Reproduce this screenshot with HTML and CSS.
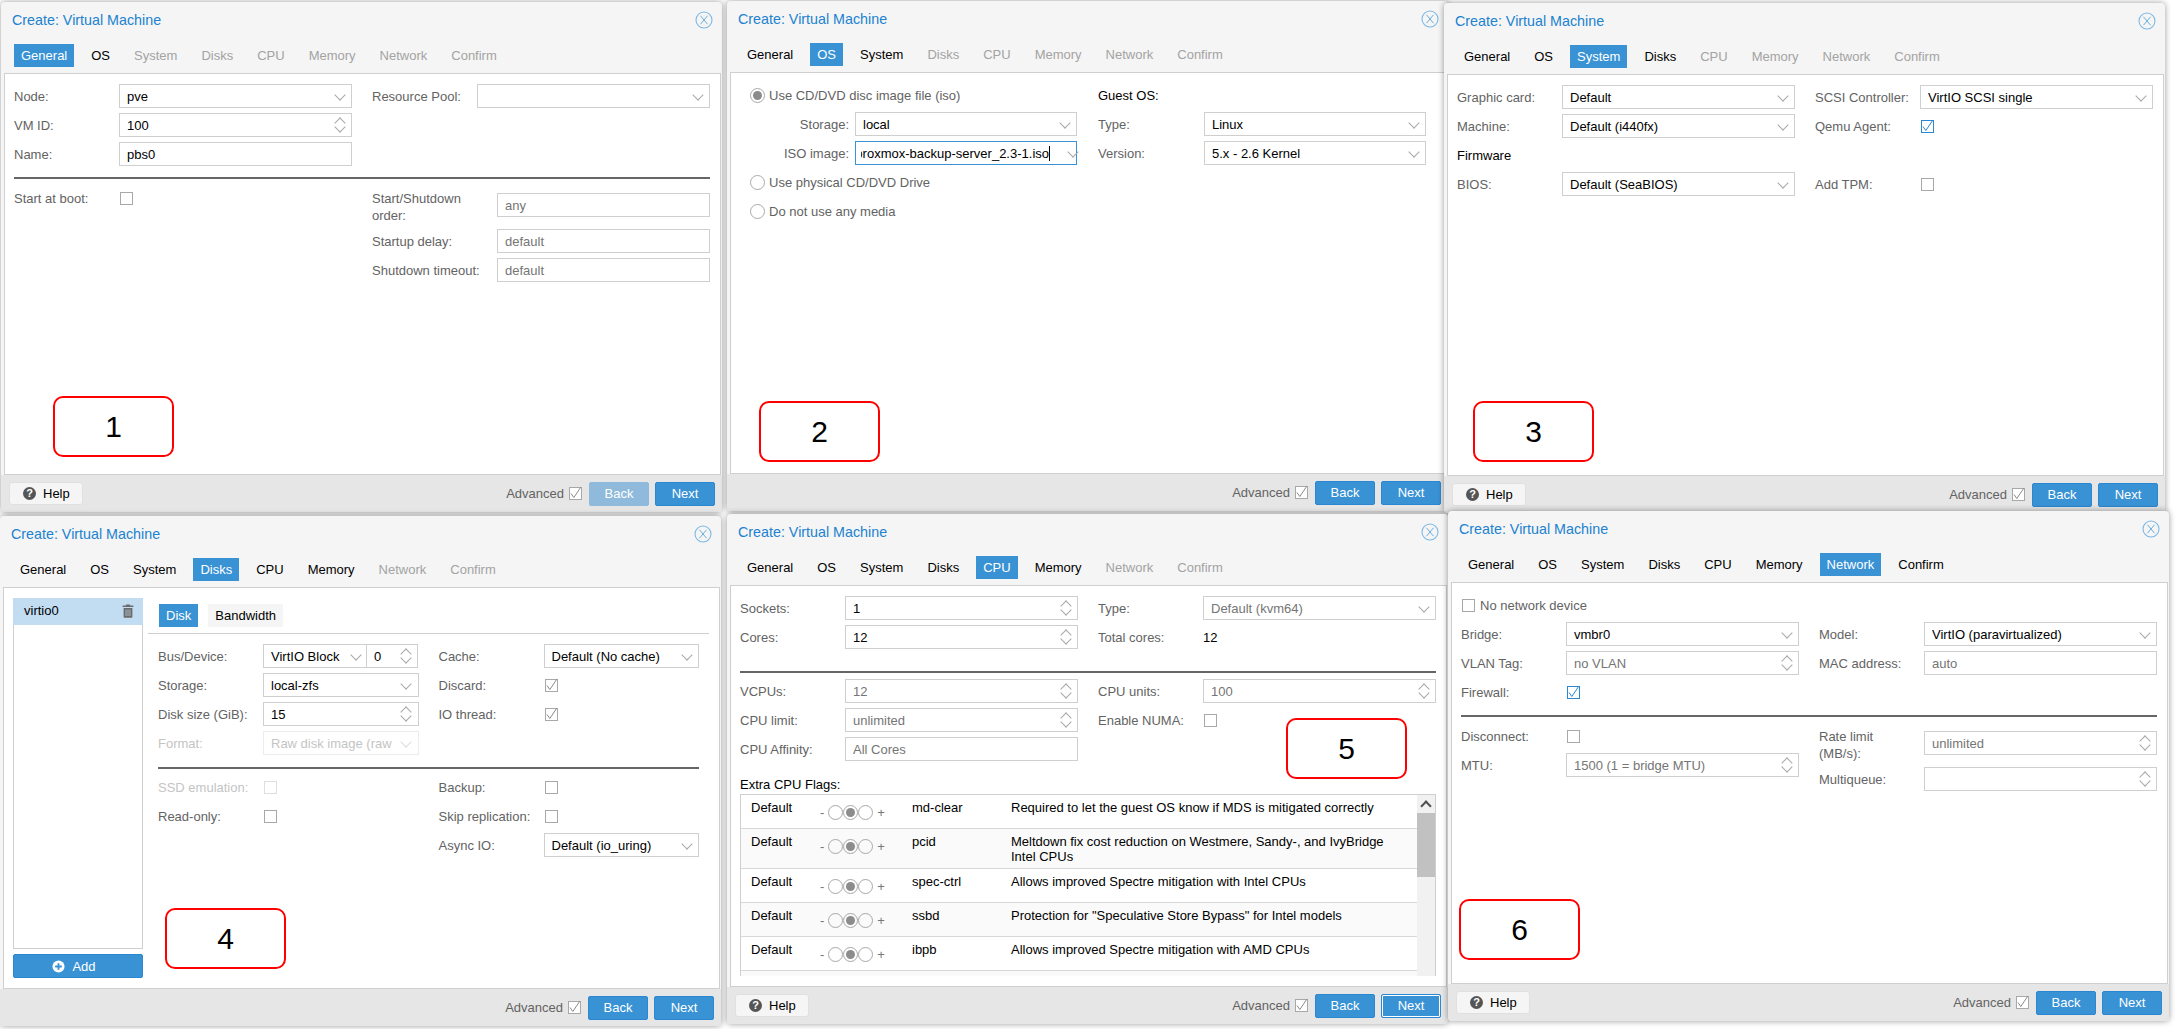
FILE: index.html
```html
<!DOCTYPE html>
<html lang="en">
<head>
  <meta charset="UTF-8">
  <title>Create: Virtual Machine wizard steps</title>
  <link rel="stylesheet" href="styles.css">
</head>
<body>
  <svg class="defs" width="0" height="0">
    <symbol id="i-close" viewBox="0 0 18 18">
      <circle cx="9" cy="9" r="8" fill="none" stroke="#7db8e4" stroke-width="1.1"/>
      <path d="M5.5 4.8l7 8.4M12.5 4.8l-7 8.4" fill="none" stroke="#6aaee0" stroke-width="1"/>
    </symbol>
    <symbol id="i-check" viewBox="0 0 13 13">
      <path d="M2 6.5L4.8 10.5L11.8 .2" fill="none" stroke="currentColor" stroke-width="1"/>
    </symbol>
    <symbol id="i-trash" viewBox="0 0 12 14">
      <path d="M4 1.5V.6h4v.9h3.4v1.6H.6V1.5zM1.6 4h8.8v8.8c0 .6-.4 1-1 1H2.6c-.6 0-1-.4-1-1z" fill="#6b6b6b"/>
      <path d="M4 5.5v6.5M6 5.5v6.5M8 5.5v6.5" stroke="#c2ddf2" stroke-width=".7"/>
    </symbol>
    <symbol id="i-add" viewBox="0 0 14 14">
      <circle cx="7" cy="7" r="6.5" fill="#fff"/>
      <path d="M7 3.4v7.2M3.4 7h7.2" stroke="#3892d4" stroke-width="2"/>
    </symbol>
  </svg>

  <!-- step 1 -->
  <section class="win win-1">
    <header class="win-head">
      <div class="title-row"><span class="title">Create: Virtual Machine</span><svg class="close"><use href="#i-close"/></svg></div>
      <nav class="tabs">
        <a class="tab active">General</a><a class="tab">OS</a><a class="tab off">System</a><a class="tab off">Disks</a><a class="tab off">CPU</a><a class="tab off">Memory</a><a class="tab off">Network</a><a class="tab off">Confirm</a>
      </nav>
    </header>
    <div class="panel">
      <div class="cols">
        <div class="col">
          <div class="row"><label class="lab">Node:</label><div class="fld"><span class="val">pve</span><i class="dd"></i></div></div>
          <div class="row"><label class="lab">VM ID:</label><div class="fld"><span class="val">100</span><i class="spin"></i></div></div>
          <div class="row"><label class="lab">Name:</label><div class="fld"><span class="val">pbs0</span></div></div>
        </div>
        <div class="col">
          <div class="row"><label class="lab">Resource Pool:</label><div class="fld"><span class="val"></span><i class="dd"></i></div></div>
        </div>
      </div>
      <hr class="sep">
      <div class="cols">
        <div class="col">
          <div class="row"><label class="lab">Start at boot:</label><i class="cb"></i></div>
        </div>
        <div class="col col-drop">
          <div class="row row-tall"><label class="lab lab-wide lab-two">Start/Shutdown order:</label><div class="fld ghost"><span class="val">any</span></div></div>
          <div class="row"><label class="lab lab-wide">Startup delay:</label><div class="fld ghost"><span class="val">default</span></div></div>
          <div class="row"><label class="lab lab-wide">Shutdown timeout:</label><div class="fld ghost"><span class="val">default</span></div></div>
        </div>
      </div>
    </div>
    <footer class="foot">
      <button class="help"><i class="q">?</i>Help</button>
      <span class="adv">Advanced</span><i class="cb tick"><svg><use href="#i-check"/></svg></i>
      <button class="btn faded">Back</button><button class="btn">Next</button>
    </footer>
  </section>

  <!-- step 2 -->
  <section class="win win-2">
    <header class="win-head">
      <div class="title-row"><span class="title">Create: Virtual Machine</span><svg class="close"><use href="#i-close"/></svg></div>
      <nav class="tabs">
        <a class="tab">General</a><a class="tab active">OS</a><a class="tab">System</a><a class="tab off">Disks</a><a class="tab off">CPU</a><a class="tab off">Memory</a><a class="tab off">Network</a><a class="tab off">Confirm</a>
      </nav>
    </header>
    <div class="panel panel-os">
      <div class="cols cols-os">
        <div class="col col-os">
          <div class="row radio-row"><i class="radio on"></i><span class="lab-free">Use CD/DVD disc image file (iso)</span></div>
          <div class="row"><label class="lab lab-right">Storage:</label><div class="fld"><span class="val">local</span><i class="dd"></i></div></div>
          <div class="row"><label class="lab lab-right">ISO image:</label><div class="fld focus"><span class="val val-end">proxmox-backup-server_2.3-1.iso<b class="caret"></b></span><i class="dd"></i></div></div>
          <div class="row radio-row"><i class="radio"></i><span class="lab-free">Use physical CD/DVD Drive</span></div>
          <div class="row radio-row"><i class="radio"></i><span class="lab-free">Do not use any media</span></div>
        </div>
        <div class="col">
          <div class="row"><span class="head-lab">Guest OS:</span></div>
          <div class="row"><label class="lab lab-os">Type:</label><div class="fld"><span class="val">Linux</span><i class="dd"></i></div></div>
          <div class="row"><label class="lab lab-os">Version:</label><div class="fld"><span class="val">5.x - 2.6 Kernel</span><i class="dd"></i></div></div>
        </div>
      </div>
    </div>
    <footer class="foot">
      <span class="adv">Advanced</span><i class="cb tick"><svg><use href="#i-check"/></svg></i>
      <button class="btn">Back</button><button class="btn">Next</button>
    </footer>
  </section>

  <!-- step 3 -->
  <section class="win win-3">
    <header class="win-head">
      <div class="title-row"><span class="title">Create: Virtual Machine</span><svg class="close"><use href="#i-close"/></svg></div>
      <nav class="tabs">
        <a class="tab">General</a><a class="tab">OS</a><a class="tab active">System</a><a class="tab">Disks</a><a class="tab off">CPU</a><a class="tab off">Memory</a><a class="tab off">Network</a><a class="tab off">Confirm</a>
      </nav>
    </header>
    <div class="panel">
      <div class="cols">
        <div class="col">
          <div class="row"><label class="lab">Graphic card:</label><div class="fld"><span class="val">Default</span><i class="dd"></i></div></div>
          <div class="row"><label class="lab">Machine:</label><div class="fld"><span class="val">Default (i440fx)</span><i class="dd"></i></div></div>
        </div>
        <div class="col">
          <div class="row"><label class="lab">SCSI Controller:</label><div class="fld"><span class="val">VirtIO SCSI single</span><i class="dd"></i></div></div>
          <div class="row"><label class="lab">Qemu Agent:</label><i class="cb on"><svg><use href="#i-check"/></svg></i></div>
        </div>
      </div>
      <div class="row"><span class="head-lab">Firmware</span></div>
      <div class="cols">
        <div class="col">
          <div class="row"><label class="lab">BIOS:</label><div class="fld"><span class="val">Default (SeaBIOS)</span><i class="dd"></i></div></div>
        </div>
        <div class="col">
          <div class="row"><label class="lab">Add TPM:</label><i class="cb"></i></div>
        </div>
      </div>
    </div>
    <footer class="foot">
      <button class="help"><i class="q">?</i>Help</button>
      <span class="adv">Advanced</span><i class="cb tick"><svg><use href="#i-check"/></svg></i>
      <button class="btn">Back</button><button class="btn">Next</button>
    </footer>
  </section>

  <!-- step 4 -->
  <section class="win win-4">
    <header class="win-head">
      <div class="title-row"><span class="title">Create: Virtual Machine</span><svg class="close"><use href="#i-close"/></svg></div>
      <nav class="tabs">
        <a class="tab">General</a><a class="tab">OS</a><a class="tab">System</a><a class="tab active">Disks</a><a class="tab">CPU</a><a class="tab">Memory</a><a class="tab off">Network</a><a class="tab off">Confirm</a>
      </nav>
    </header>
    <div class="panel panel-disks">
      <aside class="disk-side">
        <div class="disk-list">
          <div class="disk-item"><span>virtio0</span><svg class="trash"><use href="#i-trash"/></svg></div>
        </div>
        <button class="btn btn-add"><svg class="add"><use href="#i-add"/></svg>Add</button>
      </aside>
      <div class="disk-main">
        <nav class="subtabs"><a class="subtab active">Disk</a><a class="subtab">Bandwidth</a></nav>
        <div class="disk-form">
          <div class="cols">
            <div class="col">
              <div class="row"><label class="lab">Bus/Device:</label><div class="fld fld-bus"><span class="val">VirtIO Block</span><i class="dd"></i></div><div class="fld fld-num"><span class="val">0</span><i class="spin"></i></div></div>
              <div class="row"><label class="lab">Storage:</label><div class="fld"><span class="val">local-zfs</span><i class="dd"></i></div></div>
              <div class="row"><label class="lab">Disk size (GiB):</label><div class="fld"><span class="val">15</span><i class="spin"></i></div></div>
              <div class="row dis"><label class="lab">Format:</label><div class="fld"><span class="val">Raw disk image (raw)</span><i class="dd"></i></div></div>
            </div>
            <div class="col">
              <div class="row"><label class="lab">Cache:</label><div class="fld"><span class="val">Default (No cache)</span><i class="dd"></i></div></div>
              <div class="row"><label class="lab">Discard:</label><i class="cb tick"><svg><use href="#i-check"/></svg></i></div>
              <div class="row"><label class="lab">IO thread:</label><i class="cb tick"><svg><use href="#i-check"/></svg></i></div>
            </div>
          </div>
          <hr class="sep">
          <div class="cols">
            <div class="col">
              <div class="row dis"><label class="lab">SSD emulation:</label><i class="cb"></i></div>
              <div class="row"><label class="lab">Read-only:</label><i class="cb"></i></div>
            </div>
            <div class="col">
              <div class="row"><label class="lab">Backup:</label><i class="cb"></i></div>
              <div class="row"><label class="lab">Skip replication:</label><i class="cb"></i></div>
              <div class="row"><label class="lab">Async IO:</label><div class="fld"><span class="val">Default (io_uring)</span><i class="dd"></i></div></div>
            </div>
          </div>
        </div>
      </div>
    </div>
    <footer class="foot">
      <span class="adv">Advanced</span><i class="cb tick"><svg><use href="#i-check"/></svg></i>
      <button class="btn">Back</button><button class="btn">Next</button>
    </footer>
  </section>

  <!-- step 5 -->
  <section class="win win-5">
    <header class="win-head">
      <div class="title-row"><span class="title">Create: Virtual Machine</span><svg class="close"><use href="#i-close"/></svg></div>
      <nav class="tabs">
        <a class="tab">General</a><a class="tab">OS</a><a class="tab">System</a><a class="tab">Disks</a><a class="tab active">CPU</a><a class="tab">Memory</a><a class="tab off">Network</a><a class="tab off">Confirm</a>
      </nav>
    </header>
    <div class="panel">
      <div class="cols">
        <div class="col">
          <div class="row"><label class="lab">Sockets:</label><div class="fld"><span class="val">1</span><i class="spin"></i></div></div>
          <div class="row"><label class="lab">Cores:</label><div class="fld"><span class="val">12</span><i class="spin"></i></div></div>
        </div>
        <div class="col">
          <div class="row"><label class="lab">Type:</label><div class="fld ghost"><span class="val">Default (kvm64)</span><i class="dd"></i></div></div>
          <div class="row"><label class="lab">Total cores:</label><span class="plain">12</span></div>
        </div>
      </div>
      <hr class="sep sep-wide">
      <div class="cols">
        <div class="col">
          <div class="row"><label class="lab">VCPUs:</label><div class="fld ghost"><span class="val">12</span><i class="spin"></i></div></div>
          <div class="row"><label class="lab">CPU limit:</label><div class="fld ghost"><span class="val">unlimited</span><i class="spin"></i></div></div>
          <div class="row"><label class="lab">CPU Affinity:</label><div class="fld ghost"><span class="val">All Cores</span></div></div>
        </div>
        <div class="col">
          <div class="row"><label class="lab">CPU units:</label><div class="fld ghost"><span class="val">100</span><i class="spin"></i></div></div>
          <div class="row"><label class="lab">Enable NUMA:</label><i class="cb"></i></div>
        </div>
      </div>
      <div class="flags-title">Extra CPU Flags:</div>
      <div class="flags">
        <div class="flags-list">
          <div class="flag">
            <span class="f-state">Default</span>
            <span class="f-slide">-<i class="dot"></i><i class="dot on"></i><i class="dot"></i><em>+</em></span>
            <span class="f-name">md-clear</span>
            <span class="f-desc">Required to let the guest OS know if MDS is mitigated correctly</span>
          </div>
          <div class="flag flag-two alt">
            <span class="f-state">Default</span>
            <span class="f-slide">-<i class="dot"></i><i class="dot on"></i><i class="dot"></i><em>+</em></span>
            <span class="f-name">pcid</span>
            <span class="f-desc">Meltdown fix cost reduction on Westmere, Sandy-, and IvyBridge Intel CPUs</span>
          </div>
          <div class="flag">
            <span class="f-state">Default</span>
            <span class="f-slide">-<i class="dot"></i><i class="dot on"></i><i class="dot"></i><em>+</em></span>
            <span class="f-name">spec-ctrl</span>
            <span class="f-desc">Allows improved Spectre mitigation with Intel CPUs</span>
          </div>
          <div class="flag alt">
            <span class="f-state">Default</span>
            <span class="f-slide">-<i class="dot"></i><i class="dot on"></i><i class="dot"></i><em>+</em></span>
            <span class="f-name">ssbd</span>
            <span class="f-desc">Protection for "Speculative Store Bypass" for Intel models</span>
          </div>
          <div class="flag">
            <span class="f-state">Default</span>
            <span class="f-slide">-<i class="dot"></i><i class="dot on"></i><i class="dot"></i><em>+</em></span>
            <span class="f-name">ibpb</span>
            <span class="f-desc">Allows improved Spectre mitigation with AMD CPUs</span>
          </div>
        </div>
        <div class="sbar"><div class="sbar-up"></div><div class="sbar-thumb"></div></div>
      </div>
    </div>
    <footer class="foot">
      <button class="help"><i class="q">?</i>Help</button>
      <span class="adv">Advanced</span><i class="cb tick"><svg><use href="#i-check"/></svg></i>
      <button class="btn">Back</button><button class="btn btn-focus">Next</button>
    </footer>
  </section>

  <!-- step 6 -->
  <section class="win win-6">
    <header class="win-head">
      <div class="title-row"><span class="title">Create: Virtual Machine</span><svg class="close"><use href="#i-close"/></svg></div>
      <nav class="tabs">
        <a class="tab">General</a><a class="tab">OS</a><a class="tab">System</a><a class="tab">Disks</a><a class="tab">CPU</a><a class="tab">Memory</a><a class="tab active">Network</a><a class="tab">Confirm</a>
      </nav>
    </header>
    <div class="panel">
      <div class="row radio-row"><i class="cb cb-flush"></i><span class="lab-free">No network device</span></div>
      <div class="cols">
        <div class="col">
          <div class="row"><label class="lab">Bridge:</label><div class="fld"><span class="val">vmbr0</span><i class="dd"></i></div></div>
          <div class="row"><label class="lab">VLAN Tag:</label><div class="fld ghost"><span class="val">no VLAN</span><i class="spin"></i></div></div>
          <div class="row"><label class="lab">Firewall:</label><i class="cb on"><svg><use href="#i-check"/></svg></i></div>
        </div>
        <div class="col">
          <div class="row"><label class="lab">Model:</label><div class="fld"><span class="val">VirtIO (paravirtualized)</span><i class="dd"></i></div></div>
          <div class="row"><label class="lab">MAC address:</label><div class="fld ghost"><span class="val">auto</span></div></div>
        </div>
      </div>
      <hr class="sep">
      <div class="cols">
        <div class="col">
          <div class="row"><label class="lab">Disconnect:</label><i class="cb"></i></div>
          <div class="row"><label class="lab">MTU:</label><div class="fld ghost"><span class="val">1500 (1 = bridge MTU)</span><i class="spin"></i></div></div>
        </div>
        <div class="col col-drop">
          <div class="row row-tall"><label class="lab lab-two">Rate limit (MB/s):</label><div class="fld ghost"><span class="val">unlimited</span><i class="spin"></i></div></div>
          <div class="row"><label class="lab">Multiqueue:</label><div class="fld"><span class="val"></span><i class="spin"></i></div></div>
        </div>
      </div>
    </div>
    <footer class="foot">
      <button class="help"><i class="q">?</i>Help</button>
      <span class="adv">Advanced</span><i class="cb tick"><svg><use href="#i-check"/></svg></i>
      <button class="btn">Back</button><button class="btn">Next</button>
    </footer>
  </section>

  <!-- numbered callouts drawn over the screenshots -->
  <div class="num num-1">1</div>
  <div class="num num-2">2</div>
  <div class="num num-3">3</div>
  <div class="num num-4">4</div>
  <div class="num num-5">5</div>
  <div class="num num-6">6</div>
</body>
</html>
```

FILE: styles.css
```css
* {
  box-sizing: border-box;
}
html, body {
  height: 100%;
}
body {
  margin: 0;
  background: #fff;
  font-family: "Liberation Sans", Arial, sans-serif;
  font-size: 13px;
  color: #000;
  overflow: hidden;
  position: relative;
}
.defs {
  position: absolute;
}

/* windows sit loose on the collage, each at its own offset */
.win {
  position: absolute;
  width: 721px;
  height: 510px;
  display: flex;
  flex-direction: column;
  background: #f5f5f5;
  border-radius: 4px;
  box-shadow: 0 0 6px rgba(0, 0, 0, 0.4);
  overflow: hidden;
}
.win-1 { left: 1px; top: 2px; }
.win-2 { left: 727px; top: 1px; }
.win-3 { left: 1444px; top: 3px; }
.win-4 { left: 0; top: 516px; }
.win-5 { left: 727px; top: 514px; }
.win-6 { left: 1448px; top: 511px; }

.win-head {
  height: 71px;
  padding-left: 13px;
}
.title-row {
  display: flex;
  align-items: center;
  justify-content: space-between;
  height: 36px;
  margin-left: -2px;
  padding-right: 9px;
  margin-bottom: 6px;
}
.title {
  font-size: 14.3px;
  color: #2082d0;
}
.close {
  width: 18px;
  height: 18px;
}
.tabs {
  display: flex;
  gap: 10px;
}
.tab {
  height: 23px;
  line-height: 23px;
  padding: 0 7px;
  color: #000;
}
.tab.off {
  color: #a3a3a3;
}
.tab.active {
  background: #3892d4;
  color: #fff;
}

.panel {
  flex: 1;
  margin: 0 1px 0 3px;
  padding: 10px 10px 10px 9px;
  background: #fff;
  border: 1px solid #cfcfcf;
}
.panel-os {
  padding-right: 20px;
}
.panel-disks {
  display: flex;
  gap: 5px;
}

.cols {
  display: flex;
  gap: 20px;
}
.col {
  flex: 1;
  min-width: 0;
}
.col-drop {
  padding-top: 7px;
}
.col-drop .row:first-child {
  margin-bottom: 5px;
}
.row {
  display: flex;
  align-items: center;
  height: 24px;
  margin-bottom: 5px;
}
.row-tall {
  height: 24px;
}
.row-tall + .row {
  margin-top: 12px;
}
.lab {
  flex: 0 0 105px;
  color: #636363;
}
.lab-wide {
  flex-basis: 125px;
}
.lab-two {
  line-height: 17px;
  align-self: flex-start;
  margin-top: -3px;
  padding-right: 20px;
}
.lab-right {
  flex-basis: 115px;
  padding-right: 6px;
  text-align: right;
}
.lab-os {
  flex-basis: 106px;
}
.lab-free {
  color: #636363;
}
.head-lab {
  color: #000;
}
.cols-os {
  gap: 21px;
}
.col-os {
  flex: 0 0 337px;
}

/* form fields */
.fld {
  flex: 1;
  min-width: 0;
  height: 24px;
  display: flex;
  align-items: center;
  padding: 0 7px;
  background: #fff;
  border: 1px solid #cfcfcf;
  color: #000;
}
.fld.ghost {
  color: #757575;
}
.fld.focus {
  border-color: #3892d4;
  padding-left: 5px;
}
.val {
  flex: 1;
  min-width: 0;
  white-space: nowrap;
  overflow: hidden;
}
.val-end {
  display: flex;
  justify-content: flex-end;
  margin-right: 18px;
  flex: 0 0 189px;
}
.caret {
  flex: none;
  width: 1px;
  height: 15px;
  background: #000;
}
.dd {
  flex: none;
  width: 9px;
  height: 9px;
  display: flex;
  justify-content: center;
}
.dd::after, .spin::before, .spin::after {
  content: "";
  display: block;
  width: 7px;
  height: 7px;
  border: solid #a8a8a8;
  border-width: 0 1px 1px 0;
  transform: translateY(-1px) rotate(45deg);
}
.spin {
  flex: none;
  width: 9px;
  height: 18px;
  display: flex;
  flex-direction: column;
  align-items: center;
  justify-content: space-between;
}
.spin::before {
  transform: translateY(3px) rotate(225deg);
}
.spin::after {
  transform: translateY(-3px) rotate(45deg);
}
.fld-bus {
  flex: 0 0 104px;
  padding-right: 6px;
}
.fld-bus .val {
  flex: 0 0 69px;
  margin-right: auto;
}
.fld-num {
  flex: 0 0 52px;
  margin-left: -1px;
}
.dis .lab, .dis .fld {
  color: #c4c4c4;
}
.dis .fld {
  border-color: #ececec;
}
.dis .fld .val {
  flex: 0 0 121px;
  margin-right: auto;
}
.dis .dd::after {
  border-color: #dcdcdc;
}
.dis .cb {
  border-color: #dedede;
}

/* checkboxes and radios */
.cb {
  flex: none;
  position: relative;
  display: block;
  width: 13px;
  height: 13px;
  margin-left: 1px;
  background: #fff;
  border: 1px solid #a8a8a8;
}
.cb svg {
  position: absolute;
  left: -1px;
  top: -1px;
  width: 13px;
  height: 13px;
  overflow: visible;
}
.cb-flush {
  margin-left: 0;
}
.cb.tick {
  color: #8a8a8a;
}
.cb.on {
  border-color: #2b87d1;
  color: #2b87d1;
}
.radio-row {
  padding-left: 10px;
  gap: 4px;
}
.win-6 .radio-row {
  padding-left: 1px;
  gap: 5px;
}
.radio {
  flex: none;
  width: 15px;
  height: 15px;
  display: flex;
  align-items: center;
  justify-content: center;
  border: 1px solid #a8a8a8;
  border-radius: 50%;
}
.radio.on::after {
  content: "";
  width: 9px;
  height: 9px;
  border-radius: 50%;
  background: #8c8c8c;
}

.sep {
  height: 2px;
  margin: 6px 0 7px;
  border: 0;
  background: #666;
}
.sep-wide {
  margin-top: 17px;
  margin-bottom: 6px;
}

/* footer */
.foot {
  height: 37px;
  flex: none;
  display: flex;
  align-items: center;
  justify-content: flex-end;
  padding: 0 7px 0 8px;
  background: #e6e6e6;
}
.help {
  margin-right: auto;
  display: flex;
  align-items: center;
  gap: 7px;
  width: 74px;
  height: 23px;
  padding: 0 0 0 13px;
  background: #f5f5f5;
  border: 1px solid #e0e0e0;
  border-radius: 3px;
  font: inherit;
  color: #000;
}
.q {
  width: 13px;
  height: 13px;
  border-radius: 50%;
  background: #555;
  color: #fff;
  font-style: normal;
  font-weight: bold;
  font-size: 11px;
  line-height: 13px;
  text-align: center;
}
.adv {
  color: #636363;
  margin-right: 5px;
}
.foot .cb {
  margin: 0 7px 0 0;
}
.btn {
  width: 60px;
  height: 24px;
  padding: 0;
  background: #3892d4;
  border: 1px solid #2b87d1;
  border-radius: 2px;
  color: #fff;
  font: inherit;
}
.btn + .btn {
  margin-left: 6px;
}
.btn.faded {
  background: #8fbadb;
  border-color: #8fbadb;
}
.btn-focus {
  box-shadow: inset 0 0 0 1px #fff;
}

/* disks step */
.disk-side {
  flex: 0 0 130px;
  display: flex;
  flex-direction: column;
  gap: 5px;
}
.disk-list {
  flex: 1;
  border: 1px solid #cfcfcf;
  border-top: 0;
}
.disk-item {
  display: flex;
  align-items: center;
  justify-content: space-between;
  height: 27px;
  margin: 0 -1px;
  padding: 0 9px 2px 11px;
  background: #c2ddf2;
}
.trash {
  width: 12px;
  height: 14px;
}
.btn-add {
  width: 100%;
  display: flex;
  align-items: center;
  justify-content: center;
  gap: 7px;
  padding-right: 8px;
}
.add {
  width: 13px;
  height: 13px;
}
.disk-main {
  flex: 1;
  min-width: 0;
  padding-top: 6px;
}
.subtabs {
  display: flex;
  gap: 10px;
  height: 30px;
  padding-left: 11px;
  border-bottom: 1px solid #cfcfcf;
}
.subtab {
  height: 23px;
  line-height: 23px;
  padding: 0 7px;
  background: #f5f5f5;
}
.subtab.active {
  background: #3892d4;
  color: #fff;
}
.disk-form {
  padding: 10px 10px 0;
}
.disk-form .sep {
  margin: 7px 0 6px;
}

/* cpu flags */
.flags-title {
  margin-top: 11px;
  height: 16px;
  line-height: 16px;
}
.flags {
  display: flex;
  height: 182px;
  margin-top: 1px;
  border: 1px solid #cfcfcf;
  border-bottom: 0;
  overflow: hidden;
  background: #fafafa;
}
.flags-list {
  flex: 1;
  min-width: 0;
}
.flag {
  display: flex;
  height: 34px;
  padding: 5px 0 0 10px;
  line-height: 15px;
  background: #fff;
  border-bottom: 1px solid #d8d8d8;
}
.flag.alt {
  background: #fafafa;
}
.flag-two {
  height: 40px;
}
.f-state {
  flex: 0 0 69px;
}
.f-slide {
  flex: 0 0 92px;
  display: flex;
  align-items: flex-start;
  padding-top: 5px;
  color: #777;
}
.f-slide em {
  font-style: normal;
  margin-left: 4px;
}
.dot {
  flex: none;
  width: 15px;
  height: 15px;
  display: flex;
  align-items: center;
  justify-content: center;
  border: 1px solid #a8a8a8;
  border-radius: 50%;
}
.f-slide .dot:first-of-type {
  margin-left: 4px;
}
.dot.on::after {
  content: "";
  width: 9px;
  height: 9px;
  border-radius: 50%;
  background: #8c8c8c;
}
.f-name {
  flex: 0 0 99px;
}
.f-desc {
  flex: 1;
  padding-right: 10px;
}
.sbar {
  flex: 0 0 18px;
  background: #f1f1f1;
}
.sbar-up {
  height: 18px;
  display: flex;
  align-items: center;
  justify-content: center;
}
.sbar-up::after {
  content: "";
  width: 6px;
  height: 6px;
  margin-top: 4px;
  border: solid #505050;
  border-width: 2px 0 0 2px;
  transform: rotate(45deg);
}
.sbar-thumb {
  height: 64px;
  background: #c1c1c1;
}

/* red numbered callouts */
.num {
  position: absolute;
  width: 121px;
  height: 61px;
  display: flex;
  align-items: center;
  justify-content: center;
  background: #fff;
  border: 2px solid #f00;
  border-radius: 10px;
  font-size: 30px;
}
.num-1 { left: 53px; top: 396px; }
.num-2 { left: 759px; top: 401px; }
.num-3 { left: 1473px; top: 401px; }
.num-4 { left: 165px; top: 908px; }
.num-5 { left: 1286px; top: 718px; }
.num-6 { left: 1459px; top: 899px; }
```
